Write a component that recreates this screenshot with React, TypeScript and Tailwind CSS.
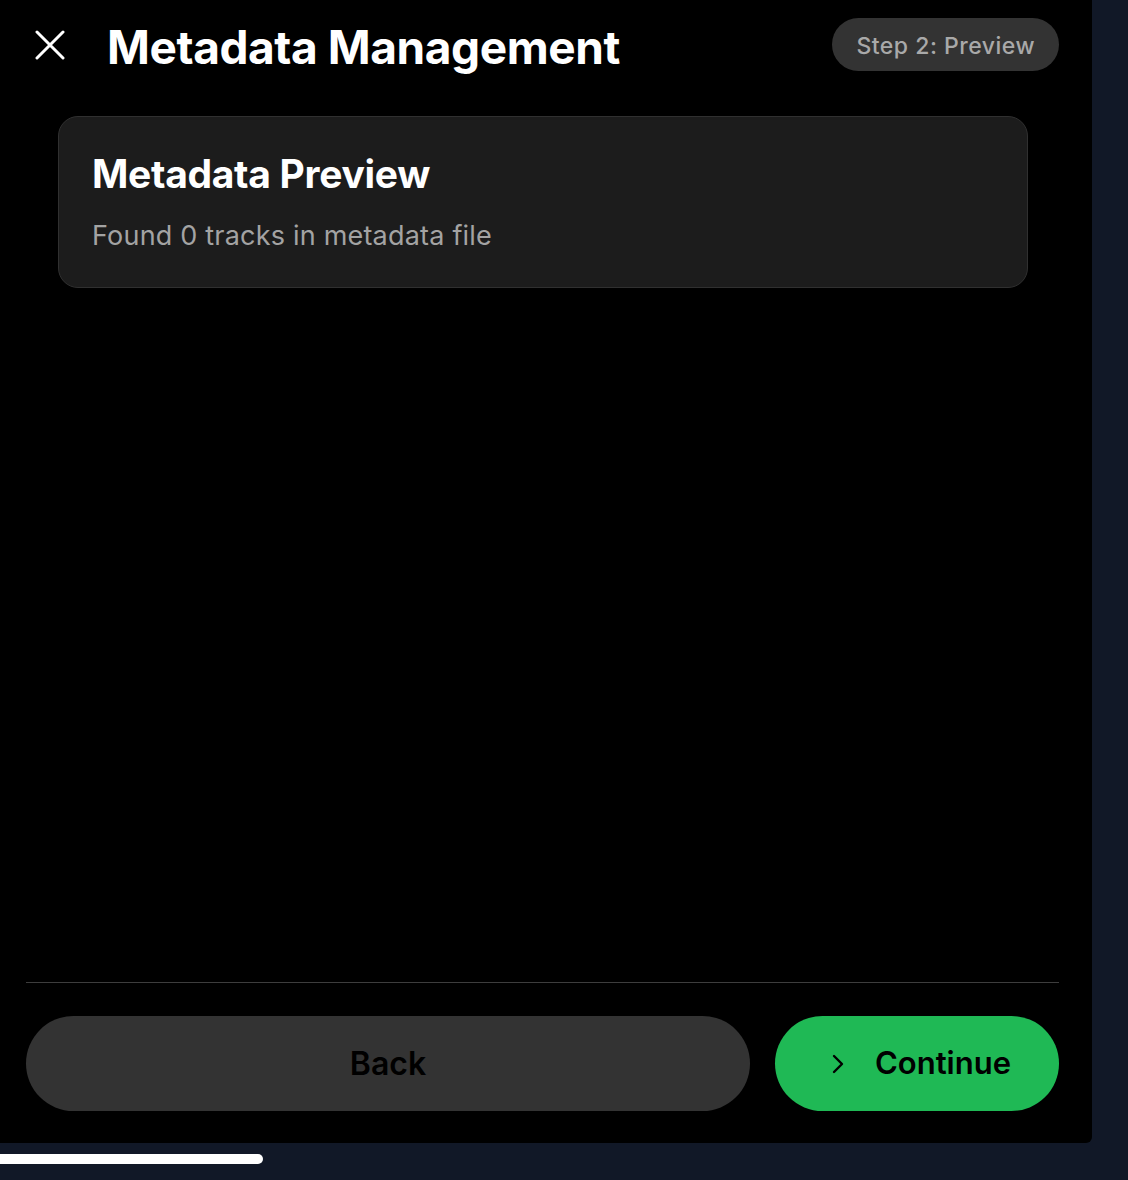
import React from 'react'

const CloseIcon = () => (
  <svg width="30" height="30" viewBox="0 0 30 30" fill="none" className="shrink-0">
    <path d="M2 2 L28 28 M28 2 L2 28" stroke="white" strokeWidth="3" strokeLinecap="round" />
  </svg>
)

const Chevron = () => (
  <svg width="14" height="22" viewBox="0 0 14 22" fill="none" className="shrink-0">
    <path d="M3 3 L11 11 L3 19" stroke="black" strokeWidth="2.4" strokeLinecap="round" strokeLinejoin="round" />
  </svg>
)

const App = () => {
  return (
    <div className="w-[1128px] h-[1180px] bg-[#111827] overflow-hidden" style={{ fontFamily: 'Inter, "Noto Sans", sans-serif' }}>
      <div className="w-[1092px] h-[1143px] bg-black rounded-br-[6px] flex flex-col">
        {/* header */}
        <div className="flex items-center justify-between pt-[18px] pl-[35px] pr-[33px]">
          <div className="flex items-center">
            <CloseIcon />
            <h1 className="ml-[42px] mt-[4px] text-[46px] font-bold text-white tracking-[-0.4px] leading-none">Metadata Management</h1>
          </div>
          <div className="h-[53px] px-[24px] pt-[3px] rounded-full bg-[#333333] flex items-center text-[23px] font-medium text-[#a9a9a9] tracking-[0.5px]">
            Step 2: Preview
          </div>
        </div>

        {/* preview card */}
        <div className="mt-[45px] ml-[58px] w-[970px] h-[172px] rounded-[20px] bg-[#1c1c1c] border border-[#303030] px-[33px] pt-[37px]">
          <h2 className="text-[39px] font-bold text-white leading-none tracking-[-0.3px]">Metadata Preview</h2>
          <p className="mt-[29px] text-[27px] text-[#a3a3a3] leading-none tracking-[0.2px]">Found 0 tracks in metadata file</p>
        </div>

        <div className="flex-1" />

        {/* footer */}
        <div className="mx-[26px] h-px bg-[#3d3d3d] mr-[33px]" />
        <div className="flex gap-[25px] pl-[26px] pr-[33px] pt-[33px] pb-[32px]">
          <button className="flex-1 h-[95px] rounded-full bg-[#333333] text-black text-[32px] font-semibold">
            Back
          </button>
          <button className="w-[284px] h-[95px] pl-[8px] rounded-full bg-[#1fb955] text-black text-[31px] font-semibold flex items-center justify-center gap-[30px]">
            <Chevron />
            Continue
          </button>
        </div>
      </div>
      <div className="mt-[11px] w-[263px] h-[10px] bg-white rounded-r-full" />
    </div>
  )
}

export default App
